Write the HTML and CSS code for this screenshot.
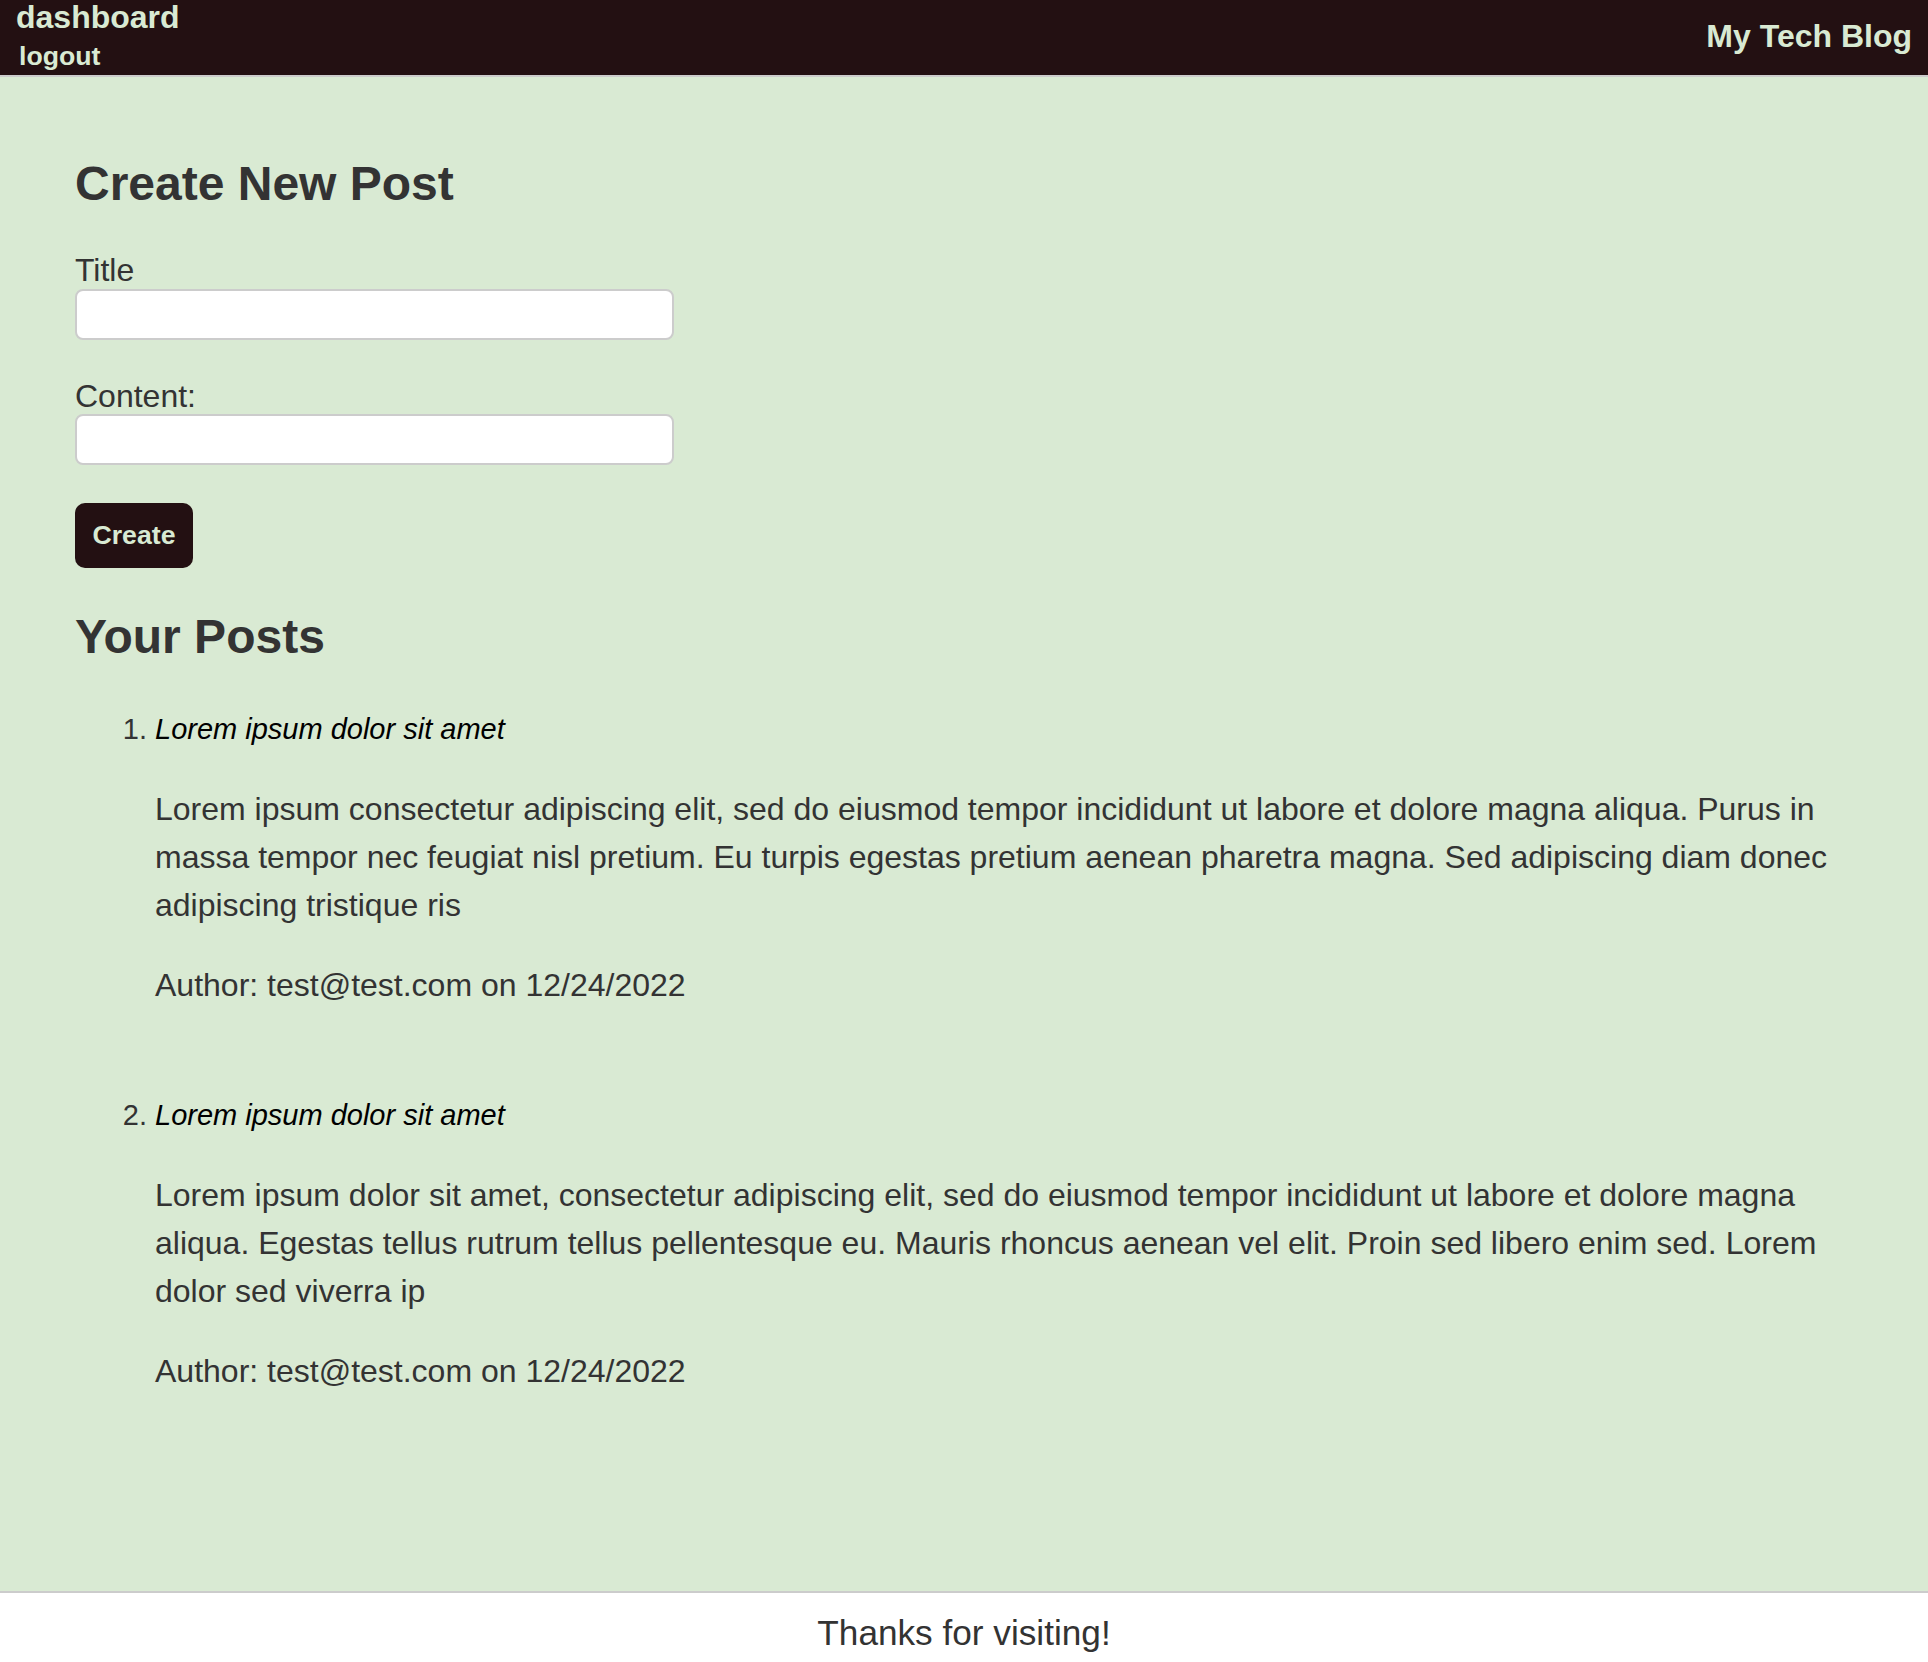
FILE: index.html
```html
<!DOCTYPE html>
<html lang="en">
<head>
<meta charset="utf-8">
<title>My Tech Blog</title>
<link rel="stylesheet" href="styles.css">
</head>
<body>
<header class="site-header">
  <nav class="nav">
    <a class="nav-link" href="#">dashboard</a>
    <button class="logout-btn" type="button">logout</button>
  </nav>
  <a class="brand" href="#">My Tech Blog</a>
</header>
<main class="main">
  <h2 class="section-title create-title">Create New Post</h2>
  <form class="post-form">
    <div class="field">
      <label class="field-label" for="title">Title</label>
      <input class="field-input" id="title" type="text">
    </div>
    <div class="field">
      <label class="field-label" for="content">Content:</label>
      <input class="field-input" id="content" type="text">
    </div>
    <button class="create-btn" type="button">Create</button>
  </form>
  <h2 class="section-title posts-title">Your Posts</h2>
  <ol class="post-list">
    <li class="post">
      <p class="post-title">Lorem ipsum dolor sit amet</p>
      <p class="post-body">Lorem ipsum consectetur adipiscing elit, sed do eiusmod tempor incididunt ut labore et dolore magna aliqua. Purus in massa tempor nec feugiat nisl pretium. Eu turpis egestas pretium aenean pharetra magna. Sed adipiscing diam donec adipiscing tristique ris</p>
      <p class="post-body">Author: test@test.com on 12/24/2022</p>
    </li>
    <li class="post">
      <p class="post-title">Lorem ipsum dolor sit amet</p>
      <p class="post-body">Lorem ipsum dolor sit amet, consectetur adipiscing elit, sed do eiusmod tempor incididunt ut labore et dolore magna aliqua. Egestas tellus rutrum tellus pellentesque eu. Mauris rhoncus aenean vel elit. Proin sed libero enim sed. Lorem dolor sed viverra ip</p>
      <p class="post-body">Author: test@test.com on 12/24/2022</p>
    </li>
  </ol>
</main>
<footer class="site-footer">
  <p class="footer-text">Thanks for visiting!</p>
</footer>
</body>
</html>
```

FILE: styles.css
```css
* {
  box-sizing: border-box;
}

html, body {
  margin: 0;
  padding: 0;
}

body {
  font-family: "Liberation Sans", Arial, Helvetica, sans-serif;
  color: #333333;
  background: #ffffff;
  min-height: 100vh;
  display: flex;
  flex-direction: column;
}

.site-header {
  background: #231012;
  height: 77px;
  border-bottom: 2px solid #cccccc;
  display: flex;
  justify-content: space-between;
  align-items: center;
  padding: 0 16px;
}

.nav {
  display: flex;
  flex-direction: column;
  align-items: flex-start;
  align-self: flex-start;
}

.nav-link {
  color: #d9ead3;
  text-decoration: none;
  font-weight: bold;
  font-size: 32px;
  line-height: 34px;
}

.logout-btn {
  background: none;
  border: none;
  padding: 0;
  margin: 7px 0 0 3px;
  color: #d9ead3;
  font-family: inherit;
  font-weight: bold;
  font-size: 26.67px;
  line-height: 30px;
  cursor: pointer;
}

.brand {
  color: #d9ead3;
  text-decoration: none;
  font-weight: bold;
  font-size: 32px;
  line-height: 36.8px;
  margin-top: -2px;
}

.main {
  flex: 1;
  background: #d9ead3;
  padding: 39px 75px 40px 75px;
}

.section-title {
  font-size: 48px;
  font-weight: bold;
  line-height: 55.2px;
  margin: 40px 0;
  color: #333333;
}

.create-title {
  margin-bottom: 41px;
}

.posts-title {
  margin-top: 41px;
}

.post-form {
  display: flex;
  flex-direction: column;
  align-items: flex-start;
}

.field {
  display: flex;
  flex-direction: column;
  margin-bottom: 37.5px;
}

.field-label {
  font-size: 32px;
  line-height: 36.8px;
}

.field-input {
  width: 599px;
  height: 51px;
  background: #ffffff;
  border: 2px solid #cccccc;
  border-radius: 8px;
  font-family: inherit;
  font-size: 26px;
  padding: 0 10px;
}

.create-btn {
  width: 118px;
  height: 65px;
  background: #231012;
  color: #d9ead3;
  border: none;
  border-radius: 10px;
  font-family: inherit;
  font-weight: bold;
  font-size: 26.67px;
  padding: 0;
  cursor: pointer;
}

.post-list {
  margin: 0;
  padding-left: 80px;
}

.post {
  font-size: 29px;
  color: #333333;
  margin-bottom: 85.5px;
}

.post-title {
  font-style: italic;
  color: #000000;
  font-size: 29px;
  line-height: 43.5px;
  margin: 43.5px 0 33.7px;
}

.post-body {
  font-size: 32px;
  line-height: 48px;
  margin: 32px 0;
  color: #333333;
}

.site-footer {
  background: #ffffff;
  border-top: 2px solid #cccccc;
  height: 71px;
  padding-top: 20px;
  text-align: center;
}

.footer-text {
  margin: 0;
  font-size: 35.2px;
  line-height: 40.4px;
  color: #333333;
}
```
